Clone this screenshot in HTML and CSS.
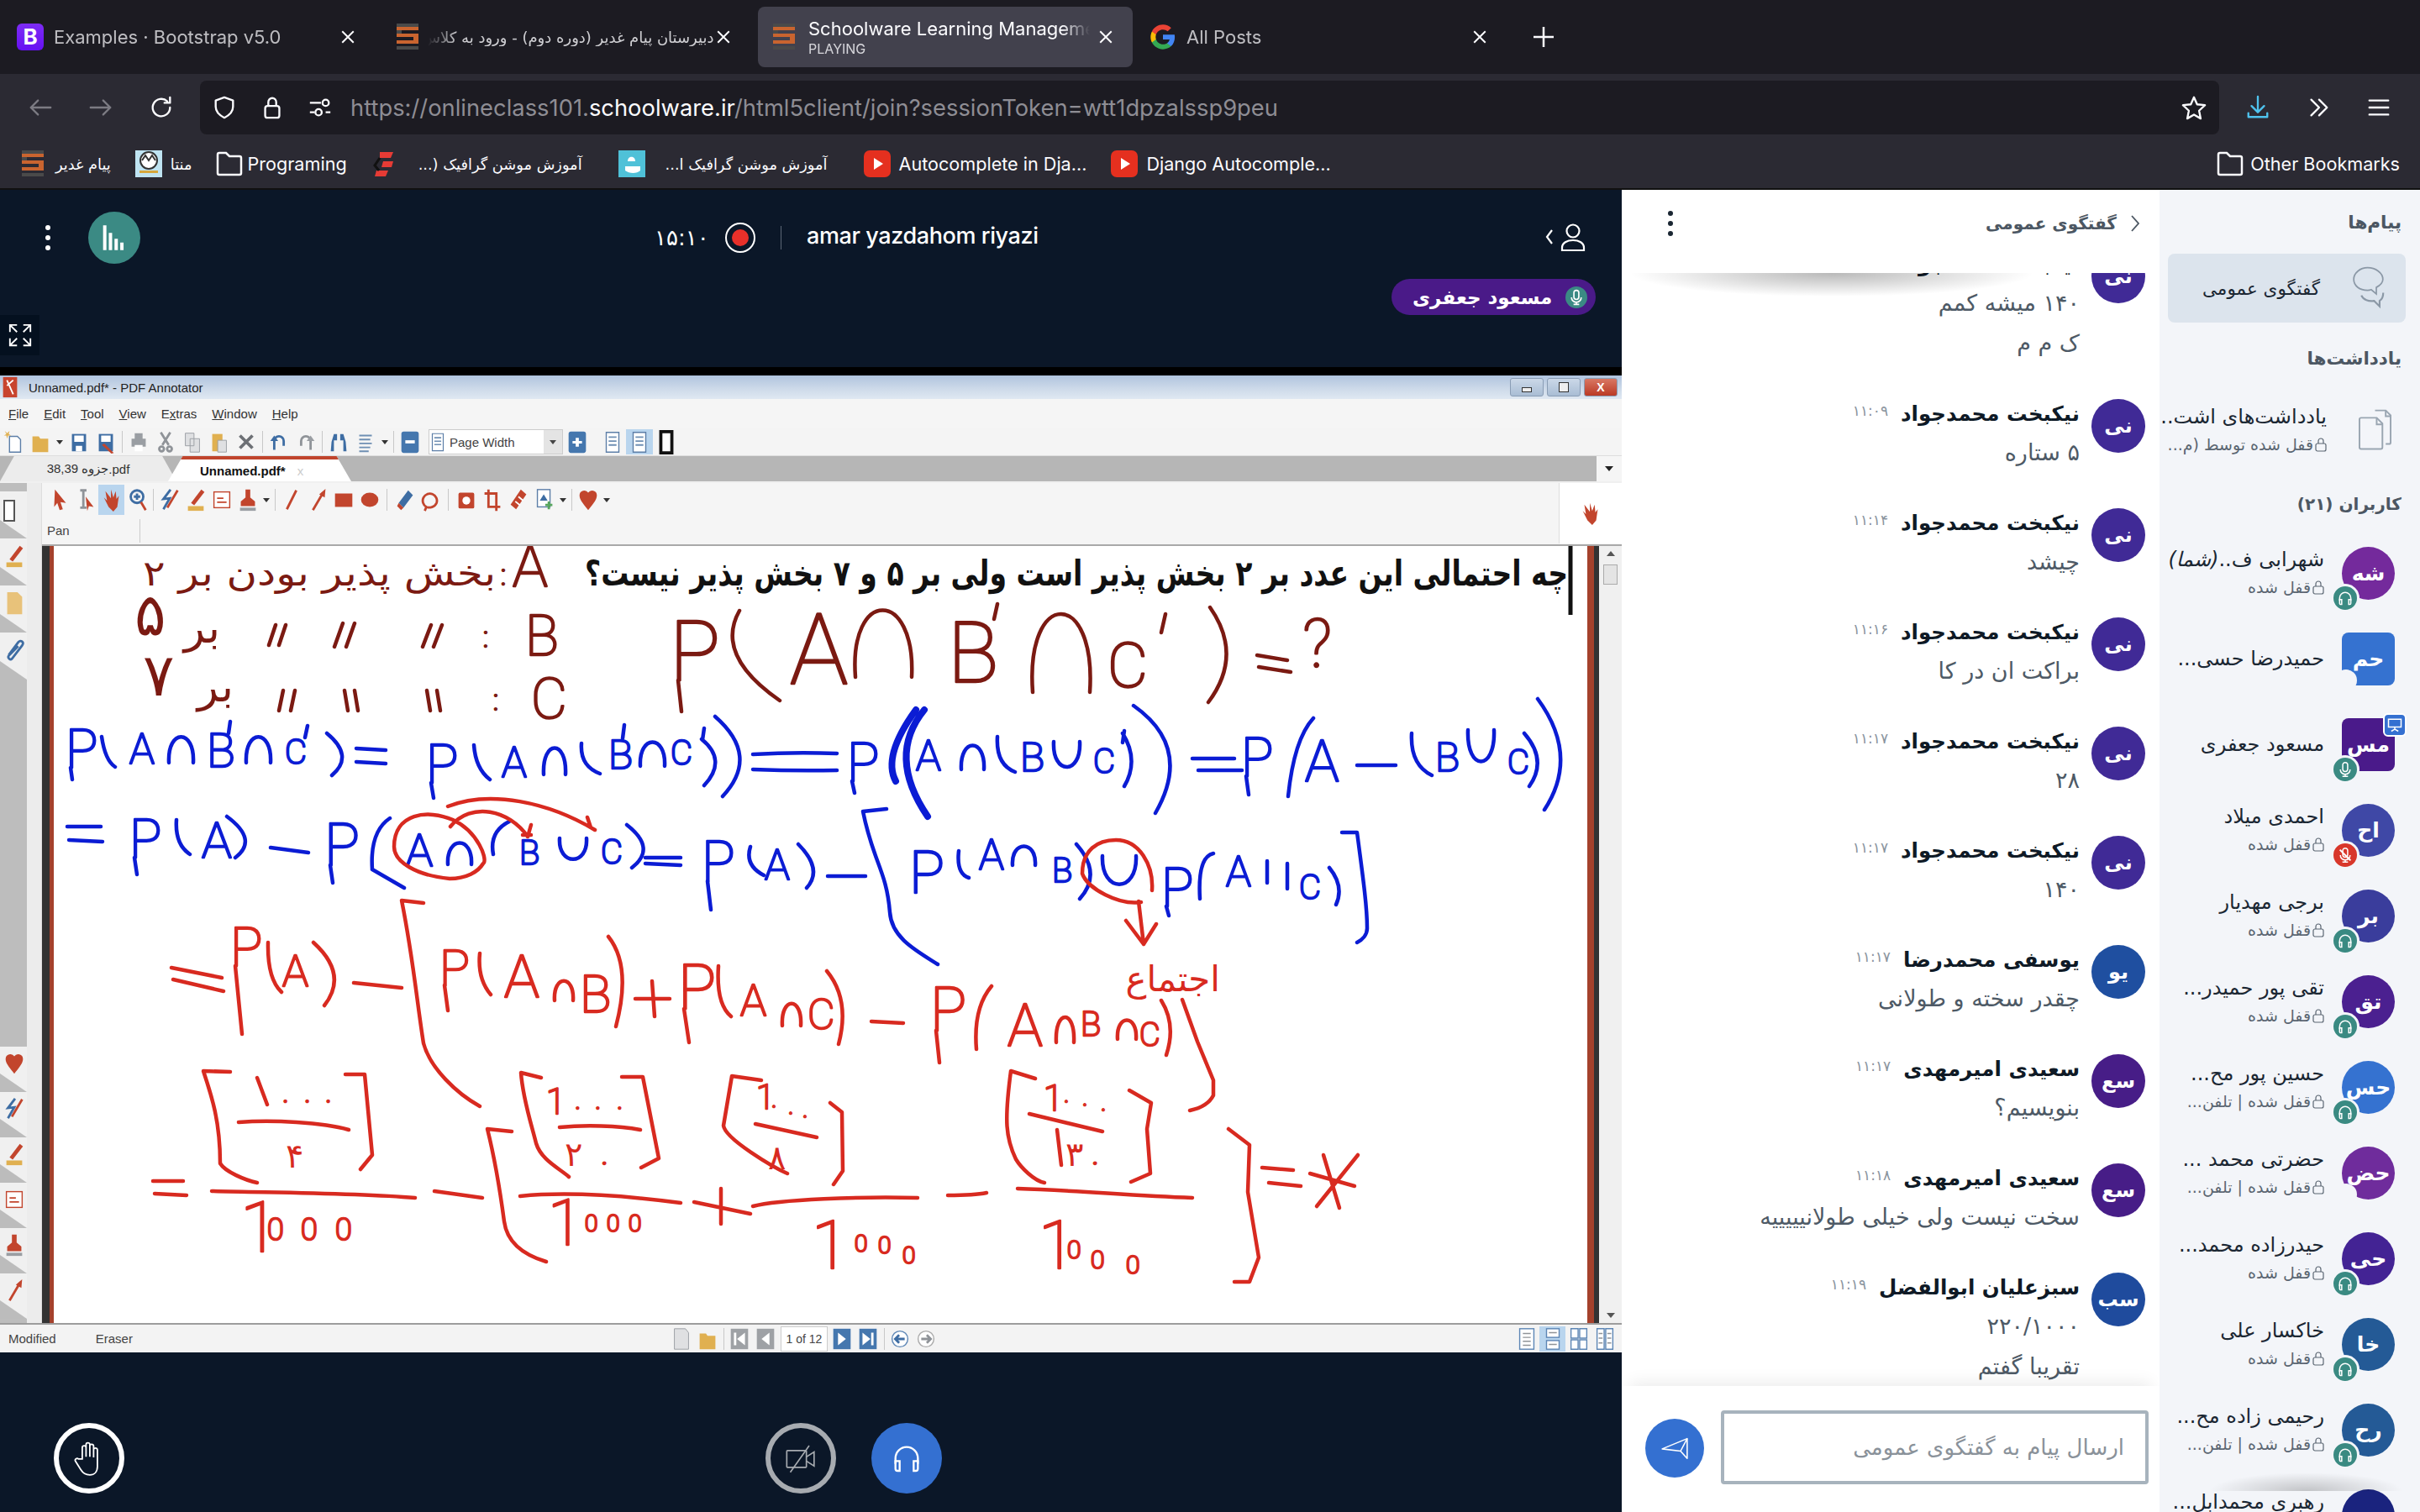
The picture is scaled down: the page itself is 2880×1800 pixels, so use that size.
FILE: index.html
```html
<!DOCTYPE html>
<html lang="fa">
<head>
<meta charset="utf-8">
<title>Schoolware Learning Management</title>
<link rel="stylesheet" href="styles.css">
</head>
<body>
<svg class="defs" width="0" height="0">
  <symbol id="s-x" viewBox="0 0 16 16"><path d="M2 2l12 12M14 2L2 14"/></symbol>
  <symbol id="s-school" viewBox="0 0 32 32"><path class="fd" d="M2 0h26v4H2z"/><path class="fo" d="M2 4h26v4H2z"/><path class="fd" d="M2 8h6v4H2z"/><path class="fo" d="M2 12h26v4H2z"/><path class="fo" d="M22 16h6v4h-6z"/><path class="fo" d="M2 20h26v4H2z"/><path class="fd" d="M2 27h26v4H2z"/></symbol>
  <symbol id="s-yt" viewBox="0 0 32 32"><rect class="yb" width="32" height="32" rx="7"/><path class="yp" d="M12 9l11 7-11 7z"/></symbol>
  <symbol id="s-folder" viewBox="0 0 32 32"><path d="M2 5a2 2 0 012-2h8l4 4h12a2 2 0 012 2v18a2 2 0 01-2 2H4a2 2 0 01-2-2z"/></symbol>
  <symbol id="s-lock" viewBox="0 0 14 18"><rect x="1" y="8" width="12" height="9" rx="2"/><path d="M4 8V5a3 3 0 016 0v3"/></symbol>
  <symbol id="s-head" viewBox="0 0 24 24"><path d="M4 16v-4a8 8 0 0116 0v4"/><path d="M4 14h3v7H5.500A1.500 1.500 0 014 19.500zM20 14h-3v7h1.500a1.500 1.500 0 001.500-1.500z"/></symbol>
  <symbol id="s-mic" viewBox="0 0 24 24"><rect x="8.500" y="2" width="7" height="13" rx="3.500"/><path d="M5 12a7 7 0 0014 0M12 19v3M8 22h8"/></symbol>
  <symbol id="t-new" viewBox="0 0 24 32"><path class="tw tline" d="M7 9h10l4 4v16H7z"/><path class="ty" d="M1 2l3 3 3-3-1 4 3 2-4 0-1 4-1-4-3 0 3-2z"/></symbol>
  <symbol id="t-open" viewBox="0 0 24 32"><path class="ty" d="M2 9h8l2 3h10v17H2z"/></symbol>
  <symbol id="t-save" viewBox="0 0 24 32"><path class="tb" d="M3 6h18v22H3z"/><path class="tw" d="M6 8h12v8H6zM8 21h8v7H8z"/></symbol>
  <symbol id="t-saveas" viewBox="0 0 24 32"><path class="tb" d="M3 6h18v22H3z"/><path class="tw" d="M6 8h12v8H6z"/><path class="tr" d="M10 18l12 12-3 1-12-11z"/></symbol>
  <symbol id="t-print" viewBox="0 0 24 32"><path class="tg" d="M7 5h10v7H7zM3 12h18v10H3z"/><path class="tw" d="M7 20h10v8H7z"/></symbol>
  <symbol id="t-cut" viewBox="0 0 24 32"><path class="tgs" d="M6 4l10 16M18 4L8 20"/><circle class="tgs" cx="7" cy="25" r="3"/><circle class="tgs" cx="17" cy="25" r="3"/></symbol>
  <symbol id="t-copy" viewBox="0 0 24 32"><path class="tl" d="M3 5h11v16H3zM9 12h12v17H9z"/></symbol>
  <symbol id="t-paste" viewBox="0 0 24 32"><path class="ty" d="M3 6h13v22H3z"/><path class="tl" d="M10 14h11v15H10z"/></symbol>
  <symbol id="t-del" viewBox="0 0 24 32"><path class="tdk" d="M4 8l16 16M20 8L4 24"/></symbol>
  <symbol id="t-undo" viewBox="0 0 24 32"><path class="tbs" d="M6 26V15a6 6 0 0112 0v6"/><path class="tb" d="M1 15l5-7 5 7z"/></symbol>
  <symbol id="t-redo" viewBox="0 0 24 32"><path class="tgs" d="M18 26V15a6 6 0 00-12 0v6"/><path class="tg" d="M13 15l5-7 5 7z"/></symbol>
  <symbol id="t-find" viewBox="0 0 24 32"><path class="tb" d="M3 16l3-10h4v8H6v14H2zM21 16l-3-10h-4v8h4v14h4z"/></symbol>
  <symbol id="t-list" viewBox="0 0 24 32"><path class="tbs2" d="M4 8h16M4 13h14M4 18h16M4 23h14M4 28h12"/></symbol>
  <symbol id="t-minus" viewBox="0 0 24 32"><rect class="tb2" x="1" y="3" width="22" height="27" rx="3"/><path class="tw" d="M6 14h12v4H6z"/></symbol>
  <symbol id="t-plus" viewBox="0 0 24 32"><rect class="tb2" x="1" y="3" width="22" height="27" rx="3"/><path class="tw" d="M6 15h12v3H6zM10 11h4v11h-4z"/></symbol>
  <symbol id="t-page" viewBox="0 0 24 32"><path class="tw tline" d="M4 4h16v25H4z"/><path class="tbs2" d="M7 10h10M7 15h10M7 20h10"/></symbol>
  <symbol id="t-black" viewBox="0 0 24 32"><path class="tkb" d="M5 3h14v27H5z"/></symbol>
  <symbol id="a-ptr" viewBox="0 0 24 32"><path class="tr" d="M6 3l14 17-7-1 3 9-4 1-3-9-4 5z"/></symbol>
  <symbol id="a-sel" viewBox="0 0 24 32"><path class="tgs" d="M5 4h8M9 4v22M5 26h8"/><path class="tr" d="M12 12l10 13-6-1-2 6z"/></symbol>
  <symbol id="a-hand" viewBox="0 0 24 32"><path class="tr" d="M4 5l7 9V3l3 10 3-8 1 10 3-4-2 14-5 6-6-6-6-12 4 4z"/></symbol>
  <symbol id="a-zoom" viewBox="0 0 24 32"><circle class="tbs" cx="11" cy="12" r="8"/><path class="trs" d="M16 19l6 10"/><path class="tbs" d="M7 12h8M11 8v8"/></symbol>
  <symbol id="a-pen2" viewBox="0 0 24 32"><path class="tbs" d="M13 3L4 15l8-1-8 14"/><path class="trs" d="M22 4L9 26"/></symbol>
  <symbol id="a-hl" viewBox="0 0 24 32"><path class="tr" d="M19 3l4 3-13 17-4-3z"/><path class="ty" d="M2 24h20v6H2z"/></symbol>
  <symbol id="a-tb" viewBox="0 0 24 32"><rect class="tw trl" x="2" y="6" width="20" height="20"/><path class="trs2" d="M6 14h8M6 19h12"/></symbol>
  <symbol id="a-stamp" viewBox="0 0 24 32"><path class="tr" d="M9 3h6v10l6 5v6H3v-6l6-5z"/><path class="tg" d="M2 26h20v4H2z"/></symbol>
  <symbol id="a-line" viewBox="0 0 24 32"><path class="trs" d="M18 4L6 28"/></symbol>
  <symbol id="a-arrow" viewBox="0 0 24 32"><path class="trs" d="M6 29L19 7"/><path class="tr" d="M22 2l-1 11-7-4z"/></symbol>
  <symbol id="a-rect" viewBox="0 0 24 32"><path class="tr" d="M1 8h22v17H1z"/></symbol>
  <symbol id="a-oval" viewBox="0 0 24 32"><ellipse class="tr" cx="12" cy="16" rx="11" ry="9"/></symbol>
  <symbol id="a-eras" viewBox="0 0 24 32"><path class="tb" d="M16 4l6 6-12 16-6-6z"/><path class="tr" d="M4 20l6 6-3 3-5-5z"/></symbol>
  <symbol id="a-lasso" viewBox="0 0 24 32"><path class="trs" d="M6 25a9 9 0 1113-5c-2 5-9 7-13 5zM6 25l-2 5"/></symbol>
  <symbol id="a-cam" viewBox="0 0 24 32"><rect class="tr" x="2" y="7" width="20" height="20" rx="2"/><circle class="tw" cx="12" cy="17" r="5"/></symbol>
  <symbol id="a-crop" viewBox="0 0 24 32"><path class="trs" d="M7 3v22h15M2 8h15v22"/></symbol>
  <symbol id="a-tape" viewBox="0 0 24 32"><path class="tr" d="M15 3l7 6-13 19-7-6z"/><path class="twl" d="M8 18l6 5M12 12l6 5"/></symbol>
  <symbol id="a-img" viewBox="0 0 24 32"><rect class="tw tline" x="3" y="3" width="16" height="22"/><path class="tb" d="M6 17l5-8 5 8z"/><path class="tgr" d="M13 21h9v3h-9zM16 18h3v10h-3z"/></symbol>
  <symbol id="a-heart" viewBox="0 0 24 32"><path class="tr" d="M12 29C4 19 1 15 1 10a6 6 0 0111-3 6 6 0 0111 3c0 5-3 9-11 19z"/></symbol>
  <symbol id="a-clip" viewBox="0 0 24 32"><path class="tbs" d="M5 22L17 6c3-4 8 0 5 4L9 27c-2 2-6-1-4-4L17 11"/></symbol>
  <symbol id="a-page" viewBox="0 0 24 32"><path class="tyl" d="M3 2h13l6 6v22H3z"/></symbol>
  <symbol id="p-doc" viewBox="0 0 24 32"><path class="tl" d="M3 3h14l4 5v21H3z"/></symbol>
  <symbol id="n-first" viewBox="0 0 24 32"><rect class="tnb" x="1" y="3" width="22" height="26"/><path class="tw" d="M5 8h3v16H5zM19 8v16L9 16z"/></symbol>
  <symbol id="n-prev" viewBox="0 0 24 32"><rect class="tnb" x="1" y="3" width="22" height="26"/><path class="tw" d="M17 8v16L7 16z"/></symbol>
  <symbol id="n-next" viewBox="0 0 24 32"><rect class="tb2" x="1" y="3" width="22" height="26"/><path class="tw" d="M7 8v16l10-8z"/></symbol>
  <symbol id="n-last" viewBox="0 0 24 32"><rect class="tb2" x="1" y="3" width="22" height="26"/><path class="tw" d="M5 8v16l10-8zM16 8h3v16h-3z"/></symbol>
  <symbol id="n-back" viewBox="0 0 24 32"><circle class="tw tlineb" cx="12" cy="16" r="10"/><path class="tbs" d="M18 16H7M11 11l-5 5 5 5"/></symbol>
  <symbol id="n-fwd" viewBox="0 0 24 32"><circle class="tw tlineg" cx="12" cy="16" r="10"/><path class="tgs" d="M6 16h11M13 11l5 5-5 5"/></symbol>
  <symbol id="v-a" viewBox="0 0 24 32"><rect class="tw tlineb" x="3" y="3" width="18" height="26"/><path class="tgs1" d="M7 9h10M7 14h10M7 19h10M7 24h10"/></symbol>
  <symbol id="v-b" viewBox="0 0 24 32"><rect class="tw tlineb" x="4" y="3" width="16" height="11"/><rect class="tw tlineb" x="4" y="18" width="16" height="11"/><path class="tgs1" d="M7 8h10M7 23h10"/></symbol>
  <symbol id="v-c" viewBox="0 0 24 32"><path class="tw tlineb" d="M2 3h9v12H2zM13 3h9v12h-9zM2 17h9v12H2zM13 17h9v12h-9z"/></symbol>
  <symbol id="v-d" viewBox="0 0 24 32"><path class="tw tlineb" d="M2 3h9v26H2zM13 3h9v26h-9z"/><path class="tgs1" d="M4 9h5M4 15h5M4 21h5M15 9h5M15 15h5M15 21h5"/></symbol>
</svg>

<header class="tabbar">
  <div class="tab tab-1"><span class="bs-icon">B</span><span class="tab-title">Examples · Bootstrap v5.0</span><svg class="ic-x"><use href="#s-x"/></svg></div>
  <div class="tab tab-2"><svg class="fav"><use href="#s-school"/></svg><span class="tab-title fa-title" dir="rtl">دبیرستان پیام غدیر (دوره دوم) - ورود به کلاس</span><svg class="ic-x"><use href="#s-x"/></svg></div>
  <div class="tab tab-3 active"><svg class="fav"><use href="#s-school"/></svg><span class="tab-stack"><span class="tab-name">Schoolware Learning Management</span><span class="tab-sub">PLAYING</span></span><svg class="ic-x"><use href="#s-x"/></svg></div>
  <div class="tab tab-4"><svg class="fav" viewBox="0 0 24 24"><path fill="#4285F4" d="M22.560 12.250c0-.78-.07-1.530-.2-2.250H12v4.260h5.920c-.26 1.370-1.040 2.530-2.210 3.310v2.770h3.570c2.080-1.920 3.280-4.740 3.280-8.090z"/><path fill="#34A853" d="M12 23c2.970 0 5.460-.98 7.280-2.660l-3.570-2.770c-.98.66-2.230 1.060-3.710 1.060-2.860 0-5.290-1.930-6.160-4.530H2.180v2.840C3.990 20.530 7.700 23 12 23z"/><path fill="#FBBC05" d="M5.840 14.090c-.22-.66-.35-1.360-.35-2.090s.13-1.430.35-2.090V7.070H2.180C1.430 8.550 1 10.220 1 12s.43 3.450 1.180 4.930l3.660-2.840z"/><path fill="#EA4335" d="M12 5.380c1.620 0 3.060.56 4.210 1.640l3.150-3.150C17.450 2.090 14.970 1 12 1 7.700 1 3.990 3.470 2.180 7.070l3.660 2.840c.87-2.600 3.300-4.530 6.160-4.530z"/></svg><span class="tab-title">All Posts</span><svg class="ic-x"><use href="#s-x"/></svg></div>
  <svg class="ic-plus" viewBox="0 0 26 26"><path d="M13 1v24M1 13h24"/></svg>
</header>

<nav class="navbar">
  <svg class="nav-ic dim" viewBox="0 0 32 32"><path d="M29 16H4M13 7l-9 9 9 9"/></svg>
  <svg class="nav-ic dim" viewBox="0 0 32 32"><path d="M3 16h25M19 7l9 9-9 9"/></svg>
  <svg class="nav-ic" viewBox="0 0 32 32"><path d="M27 16a11 11 0 11-3.500-8M27 3v7h-7"/></svg>
  <div class="urlbar">
    <svg class="url-ic" viewBox="0 0 32 32"><path d="M16 3l11 4v8c0 7-5 11-11 14C10 26 5 22 5 15V7z"/></svg>
    <svg class="url-ic" viewBox="0 0 32 32"><rect x="7" y="14" width="18" height="15" rx="3"/><path d="M11 14V9a5 5 0 0110 0v5"/></svg>
    <svg class="url-ic" viewBox="0 0 32 32"><path d="M3 10h14M3 22h6M23 22h6"/><circle cx="23" cy="10" r="4"/><circle cx="14" cy="22" r="4"/></svg>
    <div class="url-text">https://onlineclass101.<b>schoolware.ir</b>/html5client/join?sessionToken=wtt1dpzalssp9peu</div>
    <svg class="url-ic star" viewBox="0 0 32 32"><path d="M16 3l4 9 10 1-7.500 7 2 10L16 25l-8.500 5 2-10L2 13l10-1z"/></svg>
  </div>
  <svg class="nav-ic blue" viewBox="0 0 32 32"><path d="M16 2v20M8 14l8 8 8-8M4 23v5h24v-5"/></svg>
  <svg class="nav-ic" viewBox="0 0 32 32"><path d="M7 6l10 10-10 10M17 6l10 10-10 10"/></svg>
  <svg class="nav-ic" viewBox="0 0 32 32"><path d="M4 7h24M4 16h24M4 25h24"/></svg>
</nav>

<div class="bookmarks">
  <span class="bm"><svg class="fav"><use href="#s-school"/></svg><span class="bm-t" dir="rtl">پیام غدیر</span></span>
  <span class="bm"><svg class="fav mnta" viewBox="0 0 32 32"><rect width="32" height="32" fill="#bfe4f2"/><circle cx="16" cy="12" r="10" fill="#fff" stroke="#333" stroke-width="2"/><path d="M8 12l4-6 4 6 4-6 4 6" fill="none" stroke="#333" stroke-width="2"/><path d="M5 24h22v3H5z" fill="#d6a73c"/></svg><span class="bm-t" dir="rtl">منتا</span></span>
  <span class="bm bm-tight"><svg class="fav outline"><use href="#s-folder"/></svg><span class="bm-t">Programing</span></span>
  <span class="bm bm-wide"><svg class="fav" viewBox="0 0 32 32"><path d="M10 2h16l-3 7H10z" fill="#e63b35"/><path d="M14 13h12l-2 7H12z" fill="#e63b35"/><path d="M6 24h14l-3 7H4z" fill="#e63b35"/><path d="M10 9l-6 9 5 6" fill="none" stroke="#111" stroke-width="3"/></svg><span class="bm-t" dir="rtl">آموزش موشن گرافیک (...</span></span>
  <span class="bm bm-wide"><svg class="fav" viewBox="0 0 32 32"><rect width="32" height="32" fill="#4fc1d8"/><path d="M8 24c5 4 14 4 18 0V19H8z" fill="#fff"/><path d="M11 13c0-7 9-7 9 0z" fill="#fff"/></svg><span class="bm-t" dir="rtl">آموزش موشن گرافیک ا...</span></span>
  <span class="bm"><svg class="fav"><use href="#s-yt"/></svg><span class="bm-t">Autocomplete in Dja...</span></span>
  <span class="bm"><svg class="fav"><use href="#s-yt"/></svg><span class="bm-t">Django Autocomple...</span></span>
  <span class="bm bm-end"><svg class="fav outline"><use href="#s-folder"/></svg><span class="bm-t">Other Bookmarks</span></span>
</div>

<main class="app">
  <section class="stage">
    <div class="topbar">
      <svg class="kebab light" viewBox="0 0 6 30"><circle cx="3" cy="3" r="3"/><circle cx="3" cy="15" r="3"/><circle cx="3" cy="27" r="3"/></svg>
      <div class="poll"><svg viewBox="0 0 30 30"><path d="M5 2v26M11 10v18M17 16v12M23 20v8"/></svg></div>
      <div class="session">
        <span class="timer">۱۵:۱۰</span>
        <span class="rec"><i></i></span>
        <span class="divider"></span>
        <span class="meeting">amar yazdahom riyazi</span>
      </div>
      <div class="userbtn"><svg viewBox="0 0 50 36"><path d="M10 10l-6 8 6 8"/><circle cx="35" cy="11" r="7.500"/><path d="M22 34v-3c0-6 6-9 13-9s13 3 13 9v3z"/></svg></div>
    </div>
    <div class="talking"><span class="pill"><span class="pill-mic"><svg><use href="#s-mic"/></svg></span><span dir="rtl">مسعود جعفری</span></span></div>
    <div class="fs-btn"><svg viewBox="0 0 32 32"><path d="M3 12V3h9M3 3l9 9M29 12V3h-9M29 3l-9 9M3 20v9h9M3 29l9-9M29 20v9h-9M29 29l-9-9"/></svg></div>
    <div class="stage-gap"></div>

    <div class="screen">
      <div class="win-title">
        <svg class="win-logo" viewBox="0 0 24 28"><path d="M3 1h18v26H3z" fill="#c8442e"/><path d="M8 5l8 18M16 5L8 12" stroke="#fff" stroke-width="2"/></svg>
        <span>Unnamed.pdf* - PDF Annotator</span>
        <span class="win-btns"><i class="wb"><b class="wb-min"></b></i><i class="wb"><b class="wb-max"></b></i><i class="wb wb-close">X</i></span>
      </div>
      <div class="win-menu"><span><u>F</u>ile</span> <span><u>E</u>dit</span> <span><u>T</u>ool</span> <span><u>V</u>iew</span> <span>E<u>x</u>tras</span> <span><u>W</u>indow</span> <span><u>H</u>elp</span></div>
      <div class="win-tools">
        <svg class="ti"><use href="#t-new"/></svg><svg class="ti"><use href="#t-open"/></svg><i class="drop"></i>
        <svg class="ti"><use href="#t-save"/></svg><svg class="ti"><use href="#t-saveas"/></svg><i class="sep"></i>
        <svg class="ti"><use href="#t-print"/></svg><svg class="ti"><use href="#t-cut"/></svg><svg class="ti"><use href="#t-copy"/></svg><svg class="ti"><use href="#t-paste"/></svg><svg class="ti"><use href="#t-del"/></svg><i class="sep"></i>
        <svg class="ti"><use href="#t-undo"/></svg><svg class="ti"><use href="#t-redo"/></svg><i class="sep"></i>
        <svg class="ti"><use href="#t-find"/></svg><svg class="ti"><use href="#t-list"/></svg><i class="drop"></i><i class="sep"></i>
        <svg class="ti"><use href="#t-minus"/></svg>
        <span class="combo"><svg class="ti-s"><use href="#t-page"/></svg>Page Width<b class="combo-arrow"></b></span>
        <svg class="ti"><use href="#t-plus"/></svg>
        <svg class="ti tgap"><use href="#t-page"/></svg><span class="ti-on"><svg class="ti"><use href="#t-page"/></svg></span><svg class="ti"><use href="#t-black"/></svg>
      </div>
      <div class="win-tabs">
        <span class="doc-tab"><bdi>جزوه 38,39</bdi>.pdf</span>
        <span class="doc-tab cur">Unnamed.pdf*<em>x</em></span>
        <span class="tabs-drop"><b></b></span>
      </div>
      <div class="win-main">
        <aside class="side-a">
          <div class="side-stack top">
            <span class="st"><i class="st-white"></i></span>
            <span class="st"><svg class="st-i"><use href="#a-hl"/></svg></span>
            <span class="st"><svg class="st-i"><use href="#a-page"/></svg></span>
            <span class="st"><svg class="st-i"><use href="#a-clip"/></svg></span>
          </div>
          <div class="side-fill"></div>
          <div class="side-stack low">
            <span class="st"><svg class="st-i"><use href="#a-heart"/></svg></span>
            <span class="st"><svg class="st-i"><use href="#a-pen2"/></svg></span>
            <span class="st"><svg class="st-i"><use href="#a-hl"/></svg></span>
            <span class="st"><svg class="st-i"><use href="#a-tb"/></svg></span>
            <span class="st"><svg class="st-i"><use href="#a-stamp"/></svg></span>
            <span class="st"><svg class="st-i"><use href="#a-arrow"/></svg></span>
          </div>
        </aside>
        <div class="win-body">
          <div class="ann-tools">
            <div class="ann-row">
              <svg class="ai"><use href="#a-ptr"/></svg><svg class="ai"><use href="#a-sel"/></svg><span class="ai-on"><svg class="ai"><use href="#a-hand"/></svg></span><svg class="ai"><use href="#a-zoom"/></svg><i class="sep"></i>
              <svg class="ai"><use href="#a-pen2"/></svg><svg class="ai"><use href="#a-hl"/></svg><svg class="ai"><use href="#a-tb"/></svg><svg class="ai"><use href="#a-stamp"/></svg><i class="drop"></i><i class="sep"></i>
              <svg class="ai"><use href="#a-line"/></svg><svg class="ai"><use href="#a-arrow"/></svg><svg class="ai"><use href="#a-rect"/></svg><svg class="ai"><use href="#a-oval"/></svg><i class="sep sep-w"></i>
              <svg class="ai"><use href="#a-eras"/></svg><svg class="ai"><use href="#a-lasso"/></svg><i class="sep sep-w"></i>
              <svg class="ai"><use href="#a-cam"/></svg><svg class="ai"><use href="#a-crop"/></svg><svg class="ai"><use href="#a-tape"/></svg><svg class="ai"><use href="#a-img"/></svg><i class="drop"></i><i class="sep"></i>
              <svg class="ai"><use href="#a-heart"/></svg><i class="drop"></i>
              <span class="ann-corner"><svg class="ai"><use href="#a-hand"/></svg></span>
            </div>
            <div class="ann-pan"><span>Pan</span></div>
          </div>
          <div class="doc-area">
            <div class="doc-edge"></div>
            <div class="doc-page">
              <svg class="ink-svg" viewBox="64 650 1825 925" width="1825" height="925">
                <path class="page-rule" d="M1869 650v82"/>
                <text class="fa-ink black" x="1866" y="697" font-size="42" textLength="1170" lengthAdjust="spacingAndGlyphs">چه احتمالی این عدد بر ۲ بخش پذیر است ولی بر ۵ و ۷ بخش پذیر نیست؟</text>
                <g class="ink maroon">
                  <text class="fa-ink" x="590" y="697" font-size="42" textLength="420" lengthAdjust="spacingAndGlyphs">بخش پذیر بودن بر ۲</text>
                  <text class="hw" font-size="70" x="610" y="698">A</text>
                  <text class="hw" font-size="34" x="596 575 587" y="696 770 845">:::</text>
                  <text class="hw" font-size="66" x="625" y="780">B</text>
                  <text class="hw" font-size="66" x="632" y="855">C</text>
                  <text class="hwf" font-size="70" x="160 170" y="756 828">۵۷</text>
                  <text class="fa-ink" x="262" y="765" font-size="52">بر</text>
                  <text class="fa-ink" x="278" y="835" font-size="52">بر</text>
                  <path d="M320 768l8-24M332 768l8-24M398 770l10-28M412 770l10-28M503 770l10-26M516 770l10-26M332 846l5-24M346 846l5-24M410 822l4 24M422 822l4 24M508 822l4 24M520 822l4 24"/>
                  <text class="hw" font-size="100" x="797" y="810">P</text>
                  <text class="hw" font-size="116" x="940" y="814">A</text>
                  <text class="hw" font-size="100" x="1128" y="812">B</text>
                  <text class="hw" font-size="74" x="1318" y="818">C</text>
                  <text class="hw" font-size="80" x="1550" y="794">?</text>
                  <path d="M807 810l4 37M1018 806C1010 700 1090 700 1085 806M1229 824C1220 700 1305 700 1297 824M928 834Q850 780 880 727M1440 723Q1480 780 1438 836M1496 780l36 6M1498 794l38 6M1183 737l4-18M1382 753l5-22"/>
                </g>
                <g class="ink blue">
                  <text class="hw" font-size="64" x="78 507 1008 1477 154 1382" y="914 932 930 924 1021 1079">PPPPPP</text>
                  <text class="hw" font-size="70" x="386 1082" y="1030 1063">PP</text>
                  <text class="hw" font-size="66" x="835" y="1049">P</text>
                  <path d="M84 914l2 14M513 932l3 18M1014 930l3 14M1483 924l3 22M160 1021l3 20M393 1030l3 21M842 1049l4 34M1388 1079l3 11"/>
                  <text class="hw" font-size="50" x="154 597 1090 1165 1459 910" y="909 925 917 1035 1055 1047">AAAAAA</text>
                  <text class="hw" font-size="68" x="1553" y="930">A</text>
                  <text class="hw" font-size="60" x="240" y="1021">A</text>
                  <text class="hw" font-size="54" x="483" y="1031">A</text>
                  <text class="hw" font-size="56" x="246" y="913">B</text>
                  <text class="hw" font-size="48" x="724 1214 1708" y="915 918 918">BBB</text>
                  <text class="hw" font-size="40" x="618 1252" y="1029 1050">BB</text>
                  <text class="hw" font-size="40" x="339 798 1794 715 1546 1301" y="909 910 921 1028 1070 920">CCCCCC</text>
                  <path d="M201 908C199 867 232 867 230 908M293 908C291 867 324 867 322 908M647 922C645 880 675 880 673 922M762 912C760 874 793 874 791 912M1144 916C1142 878 1173 878 1171 916M533 1029C531 995 563 995 561 1029M1205 1030C1203 1000 1234 1000 1232 1030M1254 883C1252 923 1287 923 1285 883M1747 869C1745 919 1780 919 1778 869M666 998C664 1031 700 1031 698 998M1312 1019C1310 1064 1354 1064 1352 1019"/>
                  <path d="M564 887Q566 915 583 928M692 885Q690 912 714 921M835 880Q866 905 838 935M851 853Q905 900 860 948M389 873Q422 900 395 923M121 877Q125 905 137 913M424 891l35 2M424 907l35 2M274 859l-2 14M366 864l-3 14M743 863l-2 16M838 867l-2 14M896 898q50-3 100-1M896 916q50 2 100 1"/>
                  <path class="fat" d="M1090 845Q1050 900 1066 930M1100 845Q1055 900 1104 972"/>
                  <path d="M1187 877Q1185 910 1208 919M1336 873Q1356 905 1338 936M1338 870l-2 14M1349 840Q1420 890 1375 968M1419 903h50M1426 917h52M1533 948Q1540 880 1563 855M1615 911h46M1680 873Q1678 910 1704 923M1814 873Q1842 905 1820 936M1830 832Q1880 900 1838 964"/>
                  <path d="M80 984h40M82 1000l40 2M210 976Q208 1005 226 1017M270 972Q308 1000 280 1021M322 1009l45 6M443 1035Q440 990 464 974M443 1035L481 1057M587 1017Q582 990 606 978M746 982Q782 1010 752 1033M768 1021h42M768 1028l42 2M893 1008Q886 1030 909 1042M950 1005Q980 1035 960 1057M985 1043h45"/>
                  <path d="M1055 963l-28 3c12 60 28 70 32 120 2 30 30 45 57 62M1597 991h18c8 60 12 90 12 114 0 8-6 14-12 17"/>
                  <path d="M1141 1013Q1138 1040 1153 1045M1281 1005Q1312 1040 1285 1070M1428 1070Q1425 1020 1444 1016M1508 1025v26M1532 1028v30M1582 1033Q1600 1055 1590 1077"/>
                </g>
                <g class="ink red">
                  <path d="M469 1008c0-40 40-45 70-32 30 14 42 48 36 52-6 10-20 18-40 18-40-4-66-20-66-38zM533 960c50-20 120-5 175 28M536 984c25-30 70-20 92 12M703 985l-4-12M628 996l4-14M622 994h10M1288 1040c0-28 18-40 40-40 28 0 45 30 43 60M1288 1040c6 18 44 38 70 34M1355 1073l6 51M1340 1096l21 28 15-24"/>
                  <text class="fa-ink" x="1452" y="1180" font-size="42">اجتماع</text>
                  <text class="hw" font-size="64" x="274" y="1150">P</text>
                  <text class="hw" font-size="60" x="523" y="1173">P</text>
                  <text class="hw" font-size="75" x="807" y="1201">P</text>
                  <text class="hw" font-size="72" x="1107" y="1227">P</text>
                  <path d="M280 1150l8 81M529 1173l4 30M814 1201l6 40M1114 1227l4 38"/>
                  <text class="hw" font-size="52" x="336 881" y="1174 1209">AA</text>
                  <text class="hw" font-size="70" x="600 1199" y="1187 1245">AA</text>
                  <text class="hw" font-size="62" x="690" y="1205">B</text>
                  <text class="hw" font-size="40" x="1286" y="1233">B</text>
                  <text class="hw" font-size="50" x="961" y="1225">C</text>
                  <text class="hw" font-size="38" x="1356" y="1245">C</text>
                  <path d="M660 1191C658 1160 684 1160 682 1191M931 1221C929 1186 955 1186 953 1221M1257 1241C1255 1201 1280 1201 1278 1241M1330 1237C1328 1207 1354 1207 1352 1237"/>
                  <path d="M204 1152l60 12M206 1166l60 14M319 1122Q318 1165 335 1181M373 1122Q415 1160 386 1197M421 1170l57 6M504 1075l-26-3c14 70 18 120 26 170 8 30 40 60 67 75M571 1135Q568 1165 584 1184M724 1115Q752 1150 733 1222M756 1189h41M776 1168l3 42M855 1150Q852 1195 870 1210M984 1156Q1012 1190 998 1243M1037 1216l38 2M1162 1249Q1158 1200 1180 1174M1382 1191Q1400 1220 1388 1256M1407 1190l18 50 19 46v18c-4 8-14 15-28 18"/>
                  <path d="M182 1406h36M184 1421l38 2M252 1418c80 2 170 2 242 8M274 1276l-32-1c10 30 20 60 20 110 6 10 30 20 44 23M411 1279h23l9 96-14 17M306 1283l12 32M284 1336c40-3 100 0 131 9"/>
                  <text class="hwf" font-size="40" x="340 672 914 1268" y="1390 1388 1392 1388">۴۲۸۳</text>
                  <text class="hw" font-size="36" x="336 362 387" y="1312 1312 1312">...</text>
                  <text class="hw" font-size="84" x="286" y="1490">1</text>
                  <text class="hw" font-size="36" x="318 358 399" y="1476 1476 1476">000</text>
                  <path d="M517 1418l57 8M609 1347l-29-3c10 40 16 80 20 110 4 30 30 42 50 48M619 1424c60-6 130 0 191 8M644 1283l-24-6c2 30 12 60 18 84 6 20 28 30 39 40M740 1282h25l19 97-21 11M666 1342c30-3 70-2 96 3M826 1431l67 14M858 1415v42M896 1436c30-8 130-12 196-10M906 1286l-35-5-10 59c2 16 60 50 76 57M988 1313l14 11 1 70-11 16M899 1338l73 16M1128 1423c15 0 32 0 46-3"/>
                  <text class="hw" font-size="42" x="650 715" y="1326 1386">1.</text>
                  <text class="hw" font-size="34" x="684 708 734" y="1320 1320 1320">...</text>
                  <text class="hw" font-size="76" x="652" y="1482">1</text>
                  <text class="hw" font-size="28" x="696 722 748" y="1466 1466 1466">000</text>
                  <text class="hw" font-size="40" x="900" y="1320">1</text>
                  <text class="hw" font-size="30" x="918 938 955" y="1318 1326 1330">...</text>
                  <text class="hw" font-size="80" x="966" y="1510">1</text>
                  <text class="hw" font-size="28" x="1017 1045 1074" y="1490 1492 1504">000</text>
                  <path d="M1211 1415c70 2 130 8 208 11M1232 1284l-29-9c-8 60-6 80 6 105 6 10 22 26 34 28M1344 1298l26 15-5 31 4 53-23 10M1225 1326l87 21M1258 1345l5 42"/>
                  <text class="hw" font-size="42" x="1242 1299" y="1322 1386">1.</text>
                  <text class="hw" font-size="30" x="1266 1288 1310" y="1312 1316 1322">...</text>
                  <text class="hw" font-size="80" x="1236" y="1510">1</text>
                  <text class="hw" font-size="30" x="1270 1298 1340" y="1498 1510 1516">000</text>
                  <path d="M1462 1344l25 19-2 56 13 78-11 29h-18M1502 1390l37 3M1510 1408l38 4"/>
                  <path d="M1575 1375l19 63M1616 1375l-49 61M1559 1397l53 15"/>
                </g>
              </svg>
            </div>
            <div class="doc-edge right"></div>
            <div class="scroll"><b class="sc-up"></b><i class="sc-thumb"></i><b class="sc-down"></b></div>
          </div>
        </div>
      </div>
      <div class="win-status">
        <span>Modified</span><span class="st-eraser">Eraser</span>
        <span class="st-pager">
          <svg class="ni"><use href="#p-doc"/></svg><svg class="ni"><use href="#t-open"/></svg><i class="sep"></i>
          <svg class="ni"><use href="#n-first"/></svg><svg class="ni"><use href="#n-prev"/></svg>
          <span class="pg-box">1 of 12</span>
          <svg class="ni"><use href="#n-next"/></svg><svg class="ni"><use href="#n-last"/></svg><i class="sep"></i>
          <svg class="ni"><use href="#n-back"/></svg><svg class="ni"><use href="#n-fwd"/></svg>
        </span>
        <span class="st-views"><svg class="ni"><use href="#v-a"/></svg><span class="ni-on"><svg class="ni"><use href="#v-b"/></svg></span><svg class="ni"><use href="#v-c"/></svg><svg class="ni"><use href="#v-d"/></svg></span>
      </div>
    </div>

    <div class="actions">
      <div class="rbtn white"><svg viewBox="0 0 40 48"><path d="M11 25V10a2.500 2.500 0 015 0v12V6a2.500 2.500 0 015 0v16V8a2.500 2.500 0 015 0v15-10a2.500 2.500 0 015 0v22c0 7-4 11-10 11s-9-2-12-7l-7-11c-1.500-2.500 2-5 4-3z"/></svg></div>
      <div class="rbtn gray cam"><svg viewBox="0 0 48 48"><rect x="4" y="13" width="28" height="24" rx="1"/><path d="M32 22l11-7v20l-11-7M9 44L36 6"/></svg></div>
      <div class="rbtn fill"><svg viewBox="0 0 24 24"><use href="#s-head"/></svg></div>
    </div>
  </section>

  <section class="chat" dir="rtl">
    <div class="chat-head">
      <svg class="chev" viewBox="0 0 12 22"><path d="M3 2l8 9-8 9"/></svg>
      <h2>گفتگوی عمومی</h2>
      <svg class="kebab dark" viewBox="0 0 6 30"><circle cx="3" cy="3" r="3"/><circle cx="3" cy="15" r="3"/><circle cx="3" cy="27" r="3"/></svg>
    </div>
    <div class="msgs">
      <div class="msgs-inner">
        <article class="msg"><span class="av c-ni">نی</span><div><p class="who">نیکبخت محمدجواد<time>۱۱:۰۵</time></p><p class="txt">۱۴۰ میشه کمم</p><p class="txt">ک م م</p></div></article>
        <article class="msg"><span class="av c-ni">نی</span><div><p class="who">نیکبخت محمدجواد<time>۱۱:۰۹</time></p><p class="txt">۵ ستاره</p></div></article>
        <article class="msg"><span class="av c-ni">نی</span><div><p class="who">نیکبخت محمدجواد<time>۱۱:۱۴</time></p><p class="txt">چیشد</p></div></article>
        <article class="msg"><span class="av c-ni">نی</span><div><p class="who">نیکبخت محمدجواد<time>۱۱:۱۶</time></p><p class="txt">براکت ان در کا</p></div></article>
        <article class="msg"><span class="av c-ni">نی</span><div><p class="who">نیکبخت محمدجواد<time>۱۱:۱۷</time></p><p class="txt">۲۸</p></div></article>
        <article class="msg"><span class="av c-ni">نی</span><div><p class="who">نیکبخت محمدجواد<time>۱۱:۱۷</time></p><p class="txt">۱۴۰</p></div></article>
        <article class="msg"><span class="av c-yo">یو</span><div><p class="who">یوسفی محمدرضا<time>۱۱:۱۷</time></p><p class="txt">چقدر سخته و طولانی</p></div></article>
        <article class="msg"><span class="av c-sa">سع</span><div><p class="who">سعیدی امیرمهدی<time>۱۱:۱۷</time></p><p class="txt">بنویسیم؟</p></div></article>
        <article class="msg"><span class="av c-sa">سع</span><div><p class="who">سعیدی امیرمهدی<time>۱۱:۱۸</time></p><p class="txt">سخت نیست ولی خیلی طولانیییییه</p></div></article>
        <article class="msg"><span class="av c-sb">سب</span><div><p class="who">سبزعلیان ابوالفضل<time>۱۱:۱۹</time></p><p class="txt">۲۲۰/۱۰۰۰</p><p class="txt">تقریبا گفتم</p></div></article>
      </div>
    </div>
    <div class="composer">
      <div class="field">ارسال پیام به گفتگوی عمومی</div>
      <div class="send"><svg viewBox="0 0 40 32"><path d="M37 3L3 17l25 3 9 10z"/><path d="M28 20L37 3"/></svg></div>
    </div>
  </section>

  <aside class="people" dir="rtl">
    <h3 class="p-h first">پیام‌ها</h3>
    <div class="p-chat">
      <svg class="bub" viewBox="0 0 46 48"><path d="M24 2c10 0 19 7 19 16s-8 15-19 15c-2 0-3 0-5-1l-7 6v-9C6 26 3 22 3 18 3 9 13 2 24 2z" transform="matrix(-.8 0 0 .8 40 0)"/><path d="M14 32c2 5 8 7 14 6l6 6v-6c3-2 4-5 4-9"/></svg>
      <span>گفتگوی عمومی</span>
    </div>
    <h3 class="p-h notes">یادداشت‌ها</h3>
    <div class="p-note">
      <svg class="docs" viewBox="0 0 40 50"><path d="M20 1h13l6 6v33a2 2 0 01-2 2h-4"/><path d="M33 1v7h6"/><path d="M3 10h19l7 7v29a2 2 0 01-2 2H3a2 2 0 01-2-2V12a2 2 0 012-2z"/><path d="M22 10v8h7"/></svg>
      <div class="p-lines"><b class="nm">یادداشت‌های اشت<span class="el">...</span></b><small><svg class="lk"><use href="#s-lock"/></svg>قفل شده توسط (م...</small></div>
    </div>
    <h3 class="p-h users">کاربران (۲۱)</h3>
    <div class="u"><span class="av2 c1">شه<em class="bd teal"><svg><use href="#s-head"/></svg></em></span><div class="p-lines"><b class="nm">شهرابی ف<span class="el">..</span><i class="me">(شما)</i></b><small><svg class="lk"><use href="#s-lock"/></svg>قفل شده</small></div></div>
    <div class="u"><span class="av2 sq c2">حم<em class="nibble"></em></span><div class="p-lines"><b class="nm">حمیدرضا حسی<span class="el">...</span></b></div></div>
    <div class="u"><span class="av2 sq c3">مس<em class="bd teal"><svg><use href="#s-mic"/></svg></em><em class="pres"><svg viewBox="0 0 24 24"><path d="M3 4h18v11H3zM12 15v3M7 21l5-3 5 3"/></svg></em></span><div class="p-lines"><b class="nm">مسعود جعفری</b></div></div>
    <div class="u"><span class="av2 c4">اح<em class="bd red"><svg><use href="#s-mic"/></svg><i class="slash"></i></em></span><div class="p-lines"><b class="nm">احمدی میلاد</b><small><svg class="lk"><use href="#s-lock"/></svg>قفل شده</small></div></div>
    <div class="u"><span class="av2 c5">بر<em class="bd teal"><svg><use href="#s-head"/></svg></em></span><div class="p-lines"><b class="nm">برجی مهدیار</b><small><svg class="lk"><use href="#s-lock"/></svg>قفل شده</small></div></div>
    <div class="u"><span class="av2 c6">تق<em class="bd teal"><svg><use href="#s-head"/></svg></em></span><div class="p-lines"><b class="nm">تقی پور حمیدر<span class="el">...</span></b><small><svg class="lk"><use href="#s-lock"/></svg>قفل شده</small></div></div>
    <div class="u"><span class="av2 c2">حس<em class="bd teal"><svg><use href="#s-head"/></svg></em></span><div class="p-lines"><b class="nm">حسین پور مح<span class="el">...</span></b><small><svg class="lk"><use href="#s-lock"/></svg>قفل شده | تلفن...</small></div></div>
    <div class="u"><span class="av2 c7">حض<em class="nibble"></em></span><div class="p-lines"><b class="nm">حضرتی محمد <span class="el">...</span></b><small><svg class="lk"><use href="#s-lock"/></svg>قفل شده | تلفن...</small></div></div>
    <div class="u"><span class="av2 c8">حی<em class="bd teal"><svg><use href="#s-head"/></svg></em></span><div class="p-lines"><b class="nm">حیدرزاده محمد<span class="el">...</span></b><small><svg class="lk"><use href="#s-lock"/></svg>قفل شده</small></div></div>
    <div class="u"><span class="av2 c9">خا<em class="bd teal"><svg><use href="#s-head"/></svg></em></span><div class="p-lines"><b class="nm">خاکسار علی</b><small><svg class="lk"><use href="#s-lock"/></svg>قفل شده</small></div></div>
    <div class="u"><span class="av2 c9">رح<em class="bd teal"><svg><use href="#s-head"/></svg></em></span><div class="p-lines"><b class="nm">رحیمی زاده مح<span class="el">...</span></b><small><svg class="lk"><use href="#s-lock"/></svg>قفل شده | تلفن...</small></div></div>
    <div class="u"><span class="av2 c10">ره</span><div class="p-lines"><b class="nm">رهبری محمدابل<span class="el">...</span></b><small><svg class="lk"><use href="#s-lock"/></svg>قفل شده</small></div></div>
    <div class="p-fade"></div>
  </aside>
</main>
</body>
</html>
```

FILE: styles.css
```css
*{box-sizing:border-box}
html,body{margin:0;padding:0}
body{width:2880px;height:1800px;overflow:hidden;background:#1c1b22;font-family:"Inter","Liberation Sans","DejaVu Sans",sans-serif;color:#fff;position:relative}
.defs{position:absolute}
p,h2,h3{margin:0;font-weight:inherit;font-size:inherit}
i,em{font-style:normal}

/* symbol colours */
.fo{fill:#c9642f}.fd{fill:#4a4a4a}.yb{fill:#e5301f}.yp{fill:#fff}
.tw{fill:#fff}.ty{fill:#e0b050}.tyl{fill:#e8c27a}.tb{fill:#3e6da3}.tb2{fill:#4577ae}.tg{fill:#9a9ea3}.tl{fill:#dfe0e2;stroke:#9a9ea3;stroke-width:1}.tr{fill:#c2452d}.tdk{fill:none;stroke:#6d7075;stroke-width:4}
.tgs{fill:none;stroke:#8f9398;stroke-width:3}.tgs1{fill:none;stroke:#8f9398;stroke-width:1.500}.tbs{fill:none;stroke:#3e6da3;stroke-width:3}.tbs2{fill:none;stroke:#6f8fb3;stroke-width:2}.trs{fill:none;stroke:#c2452d;stroke-width:3}.trs2{fill:none;stroke:#c2452d;stroke-width:2}
.tline{stroke:#5d7fa8;stroke-width:1.500}.tlineb{stroke:#5d86b5;stroke-width:1.500}.tlineg{stroke:#aaa;stroke-width:1.500}.trl{stroke:#c2452d;stroke-width:1.500}.tkb{fill:#fff;stroke:#111;stroke-width:4}.twl{fill:none;stroke:#fff;stroke-width:2}.tgr{fill:#57a65d}.tnb{fill:#9ea1a5}

/* tabs */
.tabbar{height:88px;background:#1c1b22;display:flex;align-items:center;position:relative}
.tab{height:72px;display:flex;align-items:center;border-radius:8px;font-size:22px;color:#fbfbfe;padding-left:20px;flex:none}
.tab-1{width:450px}.tab-2{width:452px}.tab-3{width:446px;padding-left:16px}.tab-4{width:440px}
.active{background:#42414d}
.bs-icon{width:32px;height:32px;border-radius:6px;background:linear-gradient(#7d2cf5,#6610f2);font:700 26px/32px "Inter",sans-serif;text-align:center;flex:none}
.fav{width:32px;height:32px;flex:none;stroke:none}
.tab-title{margin-left:12px;width:330px;overflow:hidden;white-space:nowrap;opacity:.72;flex:none}
.fa-title{font-family:"DejaVu Sans",sans-serif;font-size:18px;opacity:.8;width:350px;margin-left:0;text-align:left;-webkit-mask-image:linear-gradient(90deg,transparent 2%,#000 12%)}
.tab-stack{margin-left:12px;width:335px;overflow:hidden;white-space:nowrap;display:flex;flex-direction:column;flex:none;-webkit-mask-image:linear-gradient(90deg,#000 90%,transparent)}
.tab-name{font-size:22px;line-height:28px}
.tab-sub{font-size:16px;line-height:20px;opacity:.8}
.ic-x{width:18px;height:18px;margin-left:10px;stroke:#fbfbfe;stroke-width:1.800;fill:none;flex:none}
.tab-1 .ic-x{margin-left:11px}.tab-2 .ic-x{margin-left:0}.tab-4 .ic-x{margin-left:auto;margin-right:18px}
.ic-plus{width:26px;height:26px;margin-left:36px;stroke:#fbfbfe;stroke-width:2.500;flex:none}

/* nav */
.navbar{height:72px;background:#2b2a33;display:flex;align-items:center;padding:8px 0 0 33px}
.nav-ic{width:30px;height:30px;stroke:#fbfbfe;stroke-width:2.500;fill:none;stroke-linecap:round;stroke-linejoin:round;margin-right:42px;flex:none}
.nav-ic.dim{stroke:#7c7b83}
.navbar>.nav-ic:nth-of-type(3){margin-right:31px}
.nav-ic.blue{stroke:#4fc3ee;margin-right:42px}
.urlbar{height:64px;width:2403px;background:#1c1b22;border-radius:8px;display:flex;align-items:center;margin-right:31px;padding-left:14px;flex:none}
.url-ic{width:30px;height:30px;stroke:#fbfbfe;stroke-width:2.500;fill:none;margin-right:27px;flex:none;stroke-linejoin:round}
.url-ic:nth-of-type(3){margin-right:21px}
.url-ic.star{margin:0 15px 0 auto}
.url-text{font-size:27.350px;color:#8e8d94;white-space:nowrap}
.url-text b{font-weight:400;color:#fbfbfe}
.navbar>.nav-ic:last-child{margin-right:0}

/* bookmarks */
.bookmarks{height:64px;background:#2b2a33;display:flex;align-items:center;padding:6px 0 0 24px;font-size:21.600px}
.bm{display:flex;align-items:center;gap:10px;margin-right:29px;white-space:nowrap;flex:none;color:#fbfbfe}
.bm-tight{gap:5px}
.bm-t[dir=rtl]{font-family:"DejaVu Sans",sans-serif;font-size:17.800px}
.bm-wide{gap:24px;margin-right:43px}
.bm-end{margin:0 24px 0 auto;gap:8px}
.outline{fill:none;stroke:#fbfbfe;stroke-width:2.500}

/* app */
.app{height:1576px;margin-top:2px;display:grid;grid-template-columns:1930px 640px 310px;box-shadow:0 -2px 0 #111}
.stage{background:#0b1728;display:flex;flex-direction:column;height:1574px}
.topbar{height:106px;display:flex;align-items:flex-start;padding-top:26px;position:relative;flex:none}
.kebab{width:6px;height:30px;flex:none}
.kebab.light{fill:#fff;margin:16px 0 0 54px}
.poll{width:62px;height:62px;border-radius:50%;background:#3b8a84;margin-left:45px;display:flex;align-items:center;justify-content:center;flex:none}
.poll svg{width:34px;height:34px;fill:none;stroke:#fff;stroke-width:3.500}
.session{display:flex;align-items:center;height:62px;margin-left:612px}
.timer{font:400 26px "DejaVu Sans",sans-serif;width:60px;direction:ltr}
.rec{width:36px;height:36px;border-radius:50%;border:2.500px solid #fff;margin-left:24px;display:flex;align-items:center;justify-content:center}
.rec i{width:20px;height:20px;border-radius:50%;background:#e8302a}
.divider{width:1px;height:28px;background:#5c6675;margin:0 30px}
.meeting{font-size:27px;font-weight:500;letter-spacing:-.4px;white-space:nowrap;margin-top:-6px}
.userbtn{margin-left:auto;width:50px;height:36px;margin-right:43px;margin-top:12px}
.userbtn svg{width:50px;height:36px;fill:none;stroke:#fff;stroke-width:2.200}
.talking{height:43px;display:flex;justify-content:flex-end;padding-right:31px;flex:none}
.pill{background:#4a1a88;border-radius:22px;height:43px;width:243px;display:flex;flex-direction:row-reverse;align-items:center;justify-content:space-between;padding:0 10px 0 25px;font:700 23px "DejaVu Sans",sans-serif;white-space:nowrap}
.pill-mic{width:26px;height:26px;border-radius:50%;background:#3b8a84;display:flex;align-items:center;justify-content:center;flex:none}
.pill-mic svg{width:20px;height:20px;fill:none;stroke:#fff;stroke-width:2}
.fs-btn{width:47px;height:48px;background:#04101f;display:flex;align-items:center;justify-content:center;flex:none}
.fs-btn svg{width:30px;height:30px;fill:none;stroke:#fff;stroke-width:2}
.stage-gap{height:24px;flex:none;background:linear-gradient(#0b1728 14px,#000 14px)}

/* screen share */
.screen{height:1163px;width:1930px;display:flex;flex-direction:column;color:#333;font-family:"Liberation Sans",sans-serif;background:#f5f5f5;flex:none;overflow:hidden}
.win-title{height:28px;background:linear-gradient(#b0c4de,#cfdbea 60%,#dfe8f2);display:flex;align-items:center;font-size:15px;color:#222;flex:none}
.win-logo{width:24px;height:26px;margin-right:10px}
.win-btns{margin-left:auto;display:flex;gap:4px;padding-right:5px}
.wb{width:40px;height:22px;background:linear-gradient(#cbd8e8,#a9bdd4);border:1px solid #8a9db5;border-radius:3px;display:flex;align-items:center;justify-content:center}
.wb-min{width:12px;height:6px;border:1.500px solid #333;background:#eee;margin-top:6px}
.wb-max{width:12px;height:12px;border:1.500px solid #333;background:#eee}
.wb-close{background:linear-gradient(#d97763,#bb3a25);color:#fff;font:700 14px sans-serif}
.win-menu{height:35px;background:#f5f5f5;display:flex;align-items:center;gap:18px;padding-left:10px;font-size:15px;color:#333;flex:none}
.win-tools{height:33px;background:#f4f4f4;display:flex;align-items:center;flex:none;border-bottom:1px solid #ddd}
.ti{width:24px;height:30px;margin:0 4px;flex:none}
.tgap{margin-left:14px}
.ti-s{width:20px;height:26px;margin-right:4px}
.ti-on{background:#b9d5ee;display:flex}
.drop{width:0;height:0;border:4px solid transparent;border-top:5px solid #333;border-bottom:0;margin:0 3px;flex:none}
.sep{width:1px;height:26px;background:#c8c8c8;margin:0 3px;flex:none}
.sep-w{margin:0 5px}
.combo{width:160px;height:30px;background:#fff;border:1px solid #ccc;display:flex;align-items:center;font-size:15px;color:#444;position:relative;margin:0 1px 0 6px}
.combo-arrow{position:absolute;right:0;top:0;width:22px;height:28px;background:#e4e4e4}
.combo-arrow::after{content:"";position:absolute;left:7px;top:12px;border:4px solid transparent;border-top:5px solid #444;border-bottom:0}
.win-tabs{height:32px;background:#b6b6b6;display:flex;align-items:flex-end;font-size:15px;flex:none;position:relative;border-bottom:2px solid #f0f0f0}
.doc-tab{width:210px;height:30px;background:#ececec;clip-path:polygon(0 100%,8% 0,92% 0,100% 100%);display:flex;align-items:center;justify-content:center;color:#333}
.doc-tab.cur{background:#fff;border-top:4px solid #c0442c;margin-left:-10px;color:#111;width:218px;font-weight:700;justify-content:flex-start;padding-left:38px}
.doc-tab em{color:#ccc;margin-left:14px;font-weight:400}
.tabs-drop{position:absolute;right:0;top:0;width:30px;height:30px;background:#f5f5f5;display:flex;align-items:center;justify-content:center}
.tabs-drop b{border:5px solid transparent;border-top:6px solid #222;border-bottom:0}
.win-main{flex:1;display:flex;min-height:0}
.side-a{width:50px;background:linear-gradient(90deg,#bdbdbd 32px,#ececec 32px);display:flex;flex-direction:column;flex:none;border-right:1px solid #ddd}
.side-stack{display:flex;flex-direction:column;flex:none}
.side-stack.top{padding-top:10px}
.side-stack.low{margin-bottom:5px}
.side-fill{flex:1}
.st{height:56px;display:flex;align-items:center;padding-left:4px;position:relative;background:#f0f0f0;width:32px}
.low .st{height:54px}
.st::after{content:"";position:absolute;left:0;bottom:0;width:32px;height:22px;background:#bcbcbc;clip-path:polygon(0 100%,0 0,32px 100%)}
.st-i{width:26px;height:30px;margin-bottom:14px}
.st-white{width:14px;height:26px;border:2px solid #555;background:#fff;margin-bottom:10px}
.win-body{flex:1;display:flex;flex-direction:column;min-width:0}
.ann-tools{height:75px;background:#f5f5f5;border-bottom:2px solid #a9a9a9;flex:none}
.ann-row{height:40px;display:flex;align-items:center;padding-left:5px;position:relative}
.ai{width:24px;height:30px;margin:0 3.500px;flex:none}
.ai-on{background:#b9d5ee;display:flex;height:36px;align-items:center}
.ann-corner{position:absolute;right:0;top:0;width:75px;height:72px;background:#fff;display:flex;align-items:center;justify-content:center;border-left:1px solid #ddd}
.ann-pan{height:33px;display:flex;align-items:center;padding-left:6px;font-size:15px;color:#444}
.ann-pan span{width:111px;border-right:1px solid #ccc;height:28px;line-height:28px}
.doc-area{flex:1;display:flex;min-height:0;background:#fff}
.doc-edge{width:14px;background:linear-gradient(90deg,#333 9px,#a4412c 9px);flex:none}
.doc-edge.right{background:linear-gradient(90deg,#a4412c 8px,#333 8px)}
.doc-page{width:1825px;background:#fff;flex:none;overflow:hidden}
.ink-svg{display:block}
.scroll{width:27px;background:#f0f0f0;display:flex;flex-direction:column;align-items:center;flex:none;padding:6px 0}
.sc-up{border:5px solid transparent;border-bottom:6px solid #555;border-top:0}
.sc-down{border:5px solid transparent;border-top:6px solid #555;border-bottom:0;margin-top:auto}
.sc-thumb{width:17px;height:24px;background:#e4e4e4;border:1px solid #aaa;margin-top:10px}
.win-status{height:35px;background:#f3f3f3;border-top:2px solid #9c9c9c;display:flex;align-items:center;padding:0 5px 0 10px;font-size:15px;color:#444;flex:none}
.st-eraser{margin-left:47px}
.st-pager{display:flex;align-items:center;margin-left:638px}
.ni{width:24px;height:30px;margin:0 3.500px;flex:none}
.ni-on{background:#b9d5ee;display:flex}
.pg-box{width:56px;height:30px;background:#fff;border:1px solid #ccc;line-height:28px;text-align:center;margin:0 2px;white-space:nowrap;font-size:14px}
.st-views{margin-left:auto;display:flex;align-items:center}

/* ink on the shared page */
.page-rule{stroke:#111;stroke-width:5}
.ink path{fill:none;stroke:currentColor;stroke-width:4.500;stroke-linecap:round;stroke-linejoin:round}
.ink path.fat{stroke-width:8}
.hw{font-family:"Roboto",sans-serif;font-weight:100;fill:currentColor;stroke:currentColor;stroke-width:2.600;stroke-linejoin:round}
.hwf{font-family:"DejaVu Sans",sans-serif;fill:currentColor}
.fa-ink{font-family:"DejaVu Sans",sans-serif;direction:rtl;text-anchor:start;fill:currentColor}
.fa-ink.black{fill:#111;font-weight:700}
.maroon{color:#7b1a12}
.blue{color:#0b1cd4}
.ink.red{color:#d82a20}

/* action buttons */
.actions{height:190px;display:flex;padding:84px 0 0 64px;flex:none}
.rbtn{width:84px;height:84px;border-radius:50%;display:flex;align-items:center;justify-content:center;flex:none}
.rbtn.white{border:6px solid #fff}
.rbtn.white svg{width:36px;height:44px;fill:none;stroke:#fff;stroke-width:2}
.rbtn.gray{border:6px solid #a7abb0}
.rbtn.cam{margin-left:763px}
.rbtn.gray svg{width:40px;height:40px;fill:none;stroke:#a7abb0;stroke-width:2}
.rbtn.fill{background:#3470d1;margin-left:42px}
.rbtn.fill svg{width:40px;height:40px;fill:none;stroke:#fff;stroke-width:1.400}

/* chat */
.chat{background:#fff;display:flex;flex-direction:column;height:1574px;color:#1b2733;font-family:"DejaVu Sans",sans-serif;position:relative;overflow:hidden}
.chat-head{height:99px;display:flex;align-items:center;padding:0 24px 20px 55px;background:#fff;position:relative;z-index:2;flex:none}
.chat-head::after{content:"";position:absolute;left:10px;right:150px;top:99px;height:28px;background:radial-gradient(ellipse 50% 100% at 50% 0,rgba(0,0,0,.28),transparent);pointer-events:none}
.chev{width:12px;height:22px;fill:none;stroke:#4c5763;stroke-width:1.800;flex:none}
.chat-head h2{font-size:20px;font-weight:700;color:#4c5763;margin-right:15px;white-space:nowrap}
.kebab.dark{fill:#1b2733;margin-right:auto}
.msgs{flex:1;overflow:hidden;min-height:0}
.msgs-inner{margin-top:-28px}
.msg{display:flex;align-items:flex-start;gap:14px;padding:0 17px 42px 0}
.av{width:64px;height:64px;border-radius:50%;display:flex;align-items:center;justify-content:center;color:#fff;font-size:24px;font-weight:700;flex:none}
.c-ni{background:#402a96}.c-yo{background:#1f4fa0}.c-sa{background:#471d87}.c-sb{background:#1f4b9d}
.who{height:36px;line-height:36px;font-size:24.500px;font-weight:700;color:#0f1a26;display:flex;align-items:baseline;white-space:nowrap}
.who time{font-size:17px;font-weight:400;color:#8a949e;margin-right:15px;position:relative;top:-6px}
.txt{font-size:27px;line-height:48px;color:#4e5a66;white-space:nowrap}
.who+.txt{margin-top:4px}
.composer{height:150px;background:#fff;flex:none;padding:29px 13px 0 0;display:flex;gap:20px;position:relative;box-shadow:0 -14px 18px -10px rgba(0,0,0,.08)}
.field{width:509px;height:88px;border:4px solid #a7b3bd;border-radius:4px;font-size:26px;color:#8a929a;display:flex;align-items:center;padding:0 25px;flex:none}
.send{width:70px;height:70px;border-radius:50%;background:#3470d1;display:flex;align-items:center;justify-content:center;margin-top:10px;flex:none}
.send svg{width:36px;height:28px;fill:none;stroke:#fff;stroke-width:1.800;stroke-linejoin:round}

/* people */
.people{background:#f3f5f9;height:1574px;overflow:hidden;font-family:"DejaVu Sans",sans-serif;color:#1b2733;position:relative}
.p-h{font-size:21.500px;font-weight:700;color:#4c5763;display:flex;align-items:center;padding-right:22px;white-space:nowrap}
.p-h.first{height:76px}
.p-h.notes{height:84px}
.p-h.users{height:75px;padding-top:12px;font-size:20px}
.p-chat{height:82px;margin:0 17px 0 10px;padding:0 18px 0 0;background:#dce4ed;border-radius:8px;display:flex;align-items:center;gap:34px;font-size:21.500px;color:#1b2733;white-space:nowrap;width:283px}
.bub{width:50px;height:52px;fill:none;stroke:#8b98a6;stroke-width:2;flex:none}
.p-note{height:88px;display:flex;align-items:center;padding-right:34px;gap:38px}
.docs{width:39px;height:50px;fill:none;stroke:#9aa6b2;stroke-width:2;flex:none}
.u{height:102px;display:flex;align-items:center;padding-right:30px;gap:21px}
.av2{width:63px;height:63px;border-radius:50%;position:relative;display:flex;align-items:center;justify-content:center;color:#fff;font-size:25px;font-weight:700;flex:none}
.sq{border-radius:8px}
.c1{background:#742a9c}.c2{background:#3572d0}.c3{background:#4a1a8a}.c4{background:#3f48a6}.c5{background:#3a3d9c}.c6{background:#4b2090}.c7{background:#6f2c9c}.c8{background:#432394}.c9{background:#245a96}.c10{background:#1a237e}
.bd{position:absolute;left:-13px;top:44px;width:34px;height:34px;border-radius:50%;border:3px solid #f3f5f9;display:flex;align-items:center;justify-content:center}
.bd svg{width:20px;height:20px;fill:none;stroke:#fff;stroke-width:1.800}
.teal{background:#3a8a82}.red{background:#d8372b}
.slash{position:absolute;left:5px;top:13px;width:18px;height:2px;background:#fff;transform:rotate(45deg)}
.nibble{position:absolute;left:-8px;top:44px;width:26px;height:26px;border-radius:50%;background:#f3f5f9}
.pres{position:absolute;left:49px;top:-6px;width:28px;height:28px;background:#3470d1;border:2px solid #fff;border-radius:6px;display:flex;align-items:center;justify-content:center}
.pres svg{width:20px;height:20px;fill:none;stroke:#fff;stroke-width:1.800}
.p-lines{display:flex;flex-direction:column;gap:6px;white-space:nowrap}
.nm{font-size:24px;font-weight:400;line-height:27px;color:#1b2733}
.el{letter-spacing:-2px}
.me{font-style:italic}
small{font-size:19px;line-height:26px;color:#5b6672;display:flex;align-items:center;gap:2px}
.lk{width:14px;height:18px;fill:none;stroke:#5b6672;stroke-width:1.200;flex:none}
.p-fade{position:absolute;left:60px;right:20px;top:1527px;height:22px;background:radial-gradient(ellipse 50% 100% at 50% 100%,rgba(0,0,0,.2),transparent)}
```
